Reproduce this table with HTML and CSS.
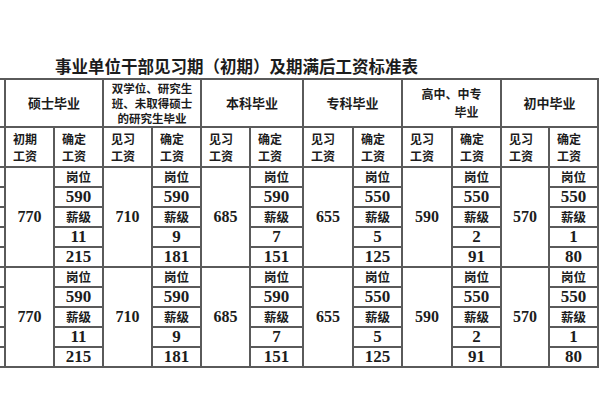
FILE: index.html
```html
<!DOCTYPE html>
<html lang="zh">
<head>
<meta charset="utf-8">
<link rel="stylesheet" href="styles.css">
</head>
<body>
<div class="page">
  <h1 class="title">事业单位干部见习期（初期）及期满后工资标准表</h1>
  <table class="wage">
    <colgroup>
      <col class="c-cut">
      <col class="c49"><col class="c49"><col class="c49"><col class="c49"><col class="c49"><col class="c53">
      <col class="c50"><col class="c49"><col class="c50"><col class="c49"><col class="c48"><col class="c49">
    </colgroup>
    <tr class="h1">
      <td></td>
      <td colspan="2" class="hd">硕士毕业</td>
      <td colspan="2" class="hd small">双学位、研究生<br>班、未取得硕士<br>的研究生毕业</td>
      <td colspan="2" class="hd">本科毕业</td>
      <td colspan="2" class="hd">专科毕业</td>
      <td colspan="2" class="hd gz"><span class="l1">高中、中专</span><br><span class="l2">毕业</span></td>
      <td colspan="2" class="hd">初中毕业</td>
    </tr>
    <tr class="h2">
      <td></td>
      <td class="sh">初期<br>工资</td><td class="sh">确定<br>工资</td>
      <td class="sh">见习<br>工资</td><td class="sh">确定<br>工资</td>
      <td class="sh">见习<br>工资</td><td class="sh">确定<br>工资</td>
      <td class="sh">见习<br>工资</td><td class="sh">确定<br>工资</td>
      <td class="sh">见习<br>工资</td><td class="sh">确定<br>工资</td>
      <td class="sh">见习<br>工资</td><td class="sh">确定<br>工资</td>
    </tr>
    <tr class="r">
      <td></td>
      <td rowspan="5" class="big">770</td><td class="lb">岗位</td>
      <td rowspan="5" class="big">710</td><td class="lb">岗位</td>
      <td rowspan="5" class="big">685</td><td class="lb">岗位</td>
      <td rowspan="5" class="big">655</td><td class="lb">岗位</td>
      <td rowspan="5" class="big">590</td><td class="lb">岗位</td>
      <td rowspan="5" class="big">570</td><td class="lb">岗位</td>
    </tr>
    <tr class="r"><td></td><td class="num">590</td><td class="num">590</td><td class="num">590</td><td class="num">550</td><td class="num">550</td><td class="num">550</td></tr>
    <tr class="r"><td></td><td class="lb">薪级</td><td class="lb">薪级</td><td class="lb">薪级</td><td class="lb">薪级</td><td class="lb">薪级</td><td class="lb">薪级</td></tr>
    <tr class="r"><td></td><td class="num">11</td><td class="num">9</td><td class="num">7</td><td class="num">5</td><td class="num">2</td><td class="num">1</td></tr>
    <tr class="r"><td></td><td class="num">215</td><td class="num">181</td><td class="num">151</td><td class="num">125</td><td class="num">91</td><td class="num">80</td></tr>
    <tr class="r">
      <td></td>
      <td rowspan="5" class="big">770</td><td class="lb">岗位</td>
      <td rowspan="5" class="big">710</td><td class="lb">岗位</td>
      <td rowspan="5" class="big">685</td><td class="lb">岗位</td>
      <td rowspan="5" class="big">655</td><td class="lb">岗位</td>
      <td rowspan="5" class="big">590</td><td class="lb">岗位</td>
      <td rowspan="5" class="big">570</td><td class="lb">岗位</td>
    </tr>
    <tr class="r"><td></td><td class="num">590</td><td class="num">590</td><td class="num">590</td><td class="num">550</td><td class="num">550</td><td class="num">550</td></tr>
    <tr class="r"><td></td><td class="lb">薪级</td><td class="lb">薪级</td><td class="lb">薪级</td><td class="lb">薪级</td><td class="lb">薪级</td><td class="lb">薪级</td></tr>
    <tr class="r"><td></td><td class="num">11</td><td class="num">9</td><td class="num">7</td><td class="num">5</td><td class="num">2</td><td class="num">1</td></tr>
    <tr class="r"><td></td><td class="num">215</td><td class="num">181</td><td class="num">151</td><td class="num">125</td><td class="num">91</td><td class="num">80</td></tr>
  </table>
</div>
</body>
</html>
```
FILE: styles.css
```css
html, body {
  margin: 0;
  padding: 0;
  background: #ffffff;
}
.page {
  width: 600px;
  height: 400px;
  overflow: hidden;
  color: #1c1c1c;
  font-family: "Liberation Serif", "Noto Sans CJK SC", serif;
}
.title {
  margin: 0;
  padding: 56px 0 2px 55px;
  font-family: "Noto Sans CJK SC", sans-serif;
  font-size: 16.5px;
  line-height: 20px;
  font-weight: 700;
  letter-spacing: 0;
  white-space: nowrap;
}
.wage {
  border-collapse: collapse;
  table-layout: fixed;
  width: 633px;
  margin-left: -36px;
}
.wage td {
  border: 2px solid #5a5a5a;
  padding: 0;
  text-align: center;
  vertical-align: middle;
  overflow: hidden;
  white-space: nowrap;
}
.c-cut { width: 40px; }
.c48 { width: 48px; }
.c49 { width: 49px; }
.c50 { width: 50px; }
.c53 { width: 53px; }
.h1 td { height: 46px; }
.h2 td { height: 38px; }
.r td { height: 18px; }
.hd {
  font-family: "Noto Sans CJK SC", sans-serif;
  font-weight: 700;
  font-size: 13px;
  line-height: 16px;
}
.hd.small {
  font-size: 11.5px;
  line-height: 15px;
}
.gz .l1 {
  display: inline-block;
}
.gz .l2 {
  display: inline-block;
  padding-left: 30px;
}
.gz {
  font-size: 12px;
  line-height: 18px;
}
.sh {
  font-family: "Noto Sans CJK SC", sans-serif;
  font-weight: 700;
  font-size: 12px;
  line-height: 17px;
  text-align: left !important;
  padding-left: 7px !important;
}
.lb {
  font-family: "Noto Sans CJK SC", sans-serif;
  font-weight: 700;
  font-size: 12.5px;
  line-height: 18px;
}
.num {
  font-family: "Liberation Serif", serif;
  font-weight: 700;
  font-size: 17px;
  line-height: 18px;
}
.big {
  font-family: "Liberation Serif", serif;
  font-weight: 700;
  font-size: 16px;
}
```
